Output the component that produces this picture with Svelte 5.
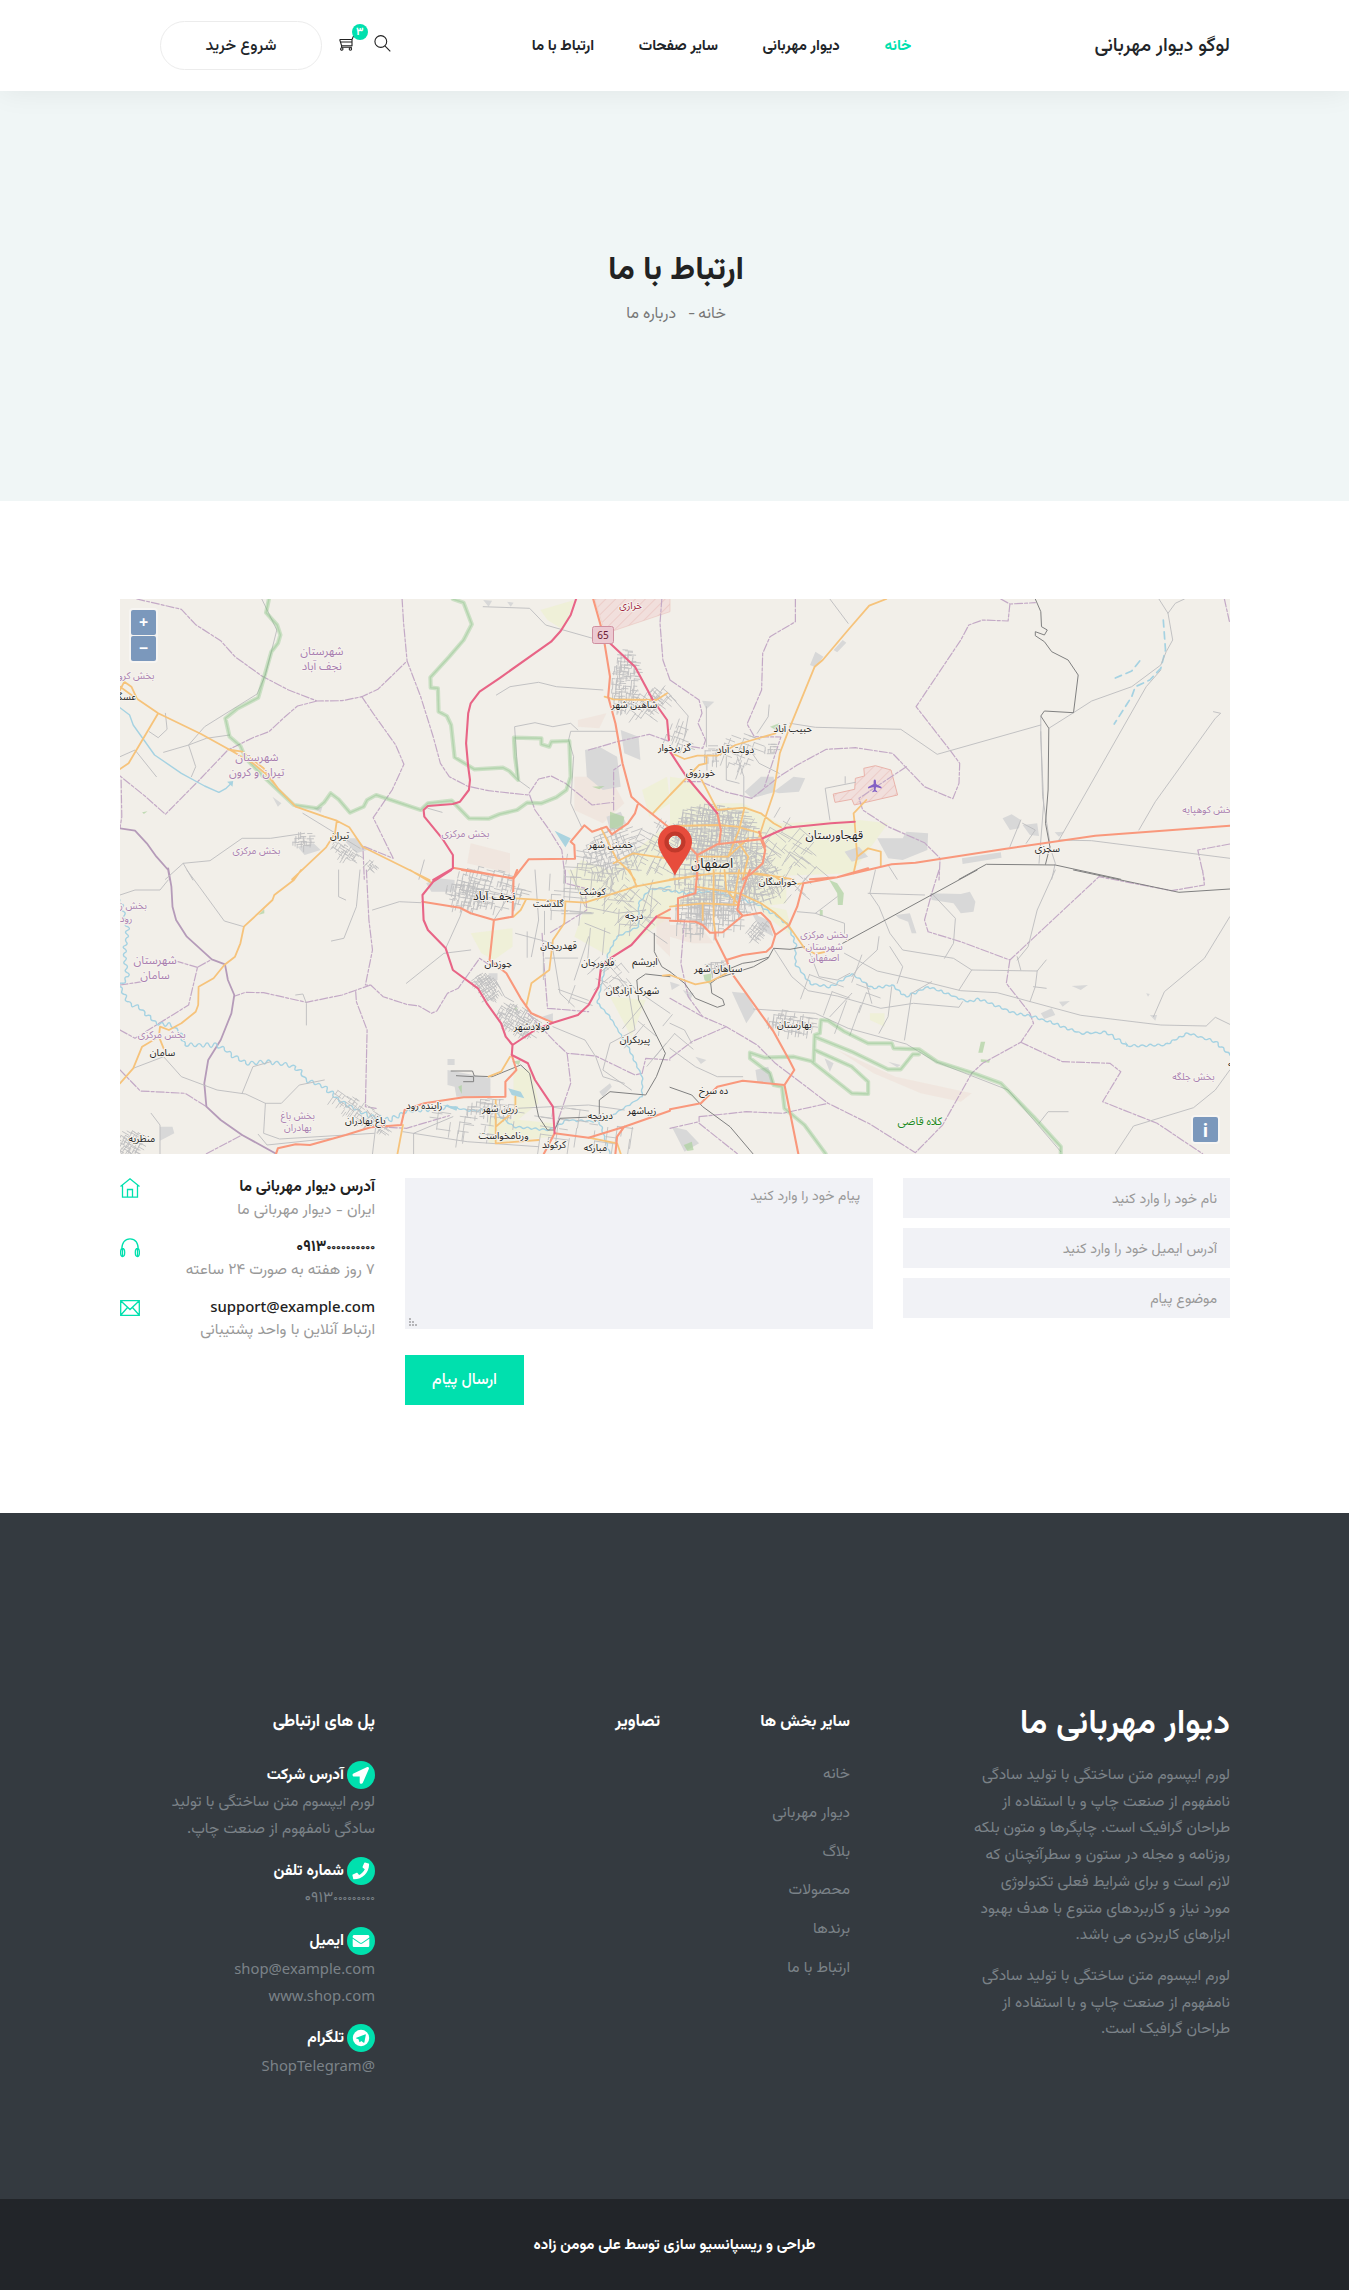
<script>
  const nav = ['خانه', 'دیوار مهربانی', 'سایر صفحات', 'ارتباط با ما'];
  const fields = ['نام خود را وارد کنید', 'آدرس ایمیل خود را وارد کنید', 'موضوع پیام'];
  const links = ['خانه', 'دیوار مهربانی', 'بلاگ', 'محصولات', 'برندها', 'ارتباط با ما'];

  // The map is authored in four survey sheets; each has its own scale and origin.
  const sheets = {
    tl: [0.35714, -10, -9],
    tr: [0.36352, 550, -9],
    bl: [0.35714, -10, 271],
    br: [0.36352, 550, 271]
  };
  const px = (s, x) => x * sheets[s][0] + sheets[s][1];
  const py = (s, y) => y / 3 + sheets[s][2];

  function line(s, pts, close = false) {
    return pts
      .split(' ')
      .map((p, i) => {
        const [x, y] = p.split(',').map(Number);
        return (i ? 'L' : 'M') + px(s, x).toFixed(1) + ' ' + py(s, y).toFixed(1);
      })
      .join('') + (close ? 'Z' : '');
  }
  const lines = (rows) => rows.map(([s, p]) => line(s, p)).join('');
  const areas = (rows) => rows.map(([s, p]) => line(s, p, true)).join('');

  function random(seed) {
    let a = seed;
    return () => {
      a = (a * 1664525 + 1013904223) % 4294967296;
      return a / 4294967296;
    };
  }

  // Street grid for a built-up patch: centre, size, rotation and block length.
  function streets([cx, cy, w, h, deg, step, keep], seed) {
    const r = random(seed * 7919 + 13);
    const t = (deg * Math.PI) / 180;
    const c = Math.cos(t);
    const n = Math.sin(t);
    const at = (x, y) => `${(cx + x * c - y * n).toFixed(1)} ${(cy + x * n + y * c).toFixed(1)}`;
    let d = '';
    for (let y = -h / 2; y <= h / 2; y += step) {
      for (let x = -w / 2; x <= w / 2; x += step) {
        if ((x * x) / (w * w / 4) + (y * y) / (h * h / 4) > 1.25) continue;
        const jx = (r() - 0.5) * step * 0.6;
        const jy = (r() - 0.5) * step * 0.6;
        if (r() < keep) d += `M${at(x + jx, y + jy)}L${at(x + jx + step * (0.8 + r() * 1.6), y + jy)}`;
        if (r() < keep) d += `M${at(x + jx, y + jy)}L${at(x + jx, y + jy + step * (0.8 + r() * 1.6))}`;
      }
    }
    return d;
  }

  // River courses wind around their general direction.
  function meander(s, pts, amp) {
    const p = pts.split(' ').map((q) => q.split(',').map(Number)).map(([x, y]) => [px(s, x), py(s, y)]);
    const r = random(71);
    let d = `M${p[0][0].toFixed(1)} ${p[0][1].toFixed(1)}`;
    let side = 1;
    for (let i = 1; i < p.length; i++) {
      const [x0, y0] = p[i - 1];
      const [x1, y1] = p[i];
      const len = Math.hypot(x1 - x0, y1 - y0) || 1;
      const k = Math.max(1, Math.round(len / 4));
      for (let j = 1; j <= k; j++) {
        const m = (j - 0.5) / k;
        const o = amp * (0.5 + r()) * side;
        side = -side;
        d += `Q${(x0 + (x1 - x0) * m - ((y1 - y0) / len) * o).toFixed(1)} ${(y0 + (y1 - y0) * m + ((x1 - x0) / len) * o).toFixed(1)} ${(x0 + ((x1 - x0) * j) / k).toFixed(1)} ${(y0 + ((y1 - y0) * j) / k).toFixed(1)}`;
      }
    }
    return d;
  }

  const fields_green = areas([
    ['tl', '1490,600 1560,560 1568,640 1510,680'],
    ['tl', '1290,850 1320,810 1400,840 1568,700 1568,870 1290,870'],
    ['tl', '1205,60 1300,30 1270,120 1225,90'],
    ['tr', '0,560 60,570 100,640 200,640 300,700 520,690 600,700 500,850 0,870'],
    ['bl', '1280,0 1568,0 1568,140 1490,200 1400,260 1300,200 1330,110'],
    ['bl', '1010,190 1127,175 1127,230 1075,270 1040,250'],
    ['bl', '1130,590 1180,600 1200,700 1130,760'],
    ['bl', '1060,740 1240,760 1240,800 1060,820'],
    ['bl', '1400,380 1500,390 1460,500'],
    ['br', '0,0 320,0 320,100 250,110 200,80 0,110'],
    ['br', '230,100 320,120 340,200 290,160'],
    ['br', '550,430 590,430 590,470 550,450']
  ]);
  const dusty = areas([
    ['tl', '1310,390 1390,370 1370,415 1310,410'],
    ['tl', '1300,560 1400,560 1440,640 1380,700 1300,660'],
    ['tl', '1010,760 1120,790 1120,850 1000,820'],
    ['bl', '1530,150 1568,140 1568,260 1530,220'],
    ['br', '460,540 620,620 830,670 800,695 690,670 560,610'],
    ['br', '0,165 80,165 120,220 60,220 0,200']
  ]);
  const built = areas([
    ['tl', '1330,480 1370,470 1420,500 1430,590 1380,600 1335,560'],
    ['tl', '1430,420 1480,440 1485,510 1440,490'],
    ['tl', '1390,680 1430,665 1445,700 1400,720'],
    ['tl', '525,770 570,760 590,780 545,795'],
    ['tl', '650,745 690,745 720,780 690,790'],
    ['tl', '455,620 480,640 470,650'], ['tl', '570,655 595,650 590,668'],
    ['tl', '1045,30 1070,32 1060,50'], ['tl', '1112,35 1130,38 1122,50'],
    ['tr', '205,605 250,560 285,560 290,605 225,625'],
    ['tr', '285,605 340,560 372,565 355,605 300,610'],
    ['tr', '385,225 400,185 422,200 400,232'],
    ['tr', '450,180 475,150 485,158 460,187'],
    ['tr', '88,332 122,335 100,358'],
    ['tr', '570,745 640,745 650,725 710,730 708,780 640,810 600,805'],
    ['tr', '803,805 910,787 912,803 805,822'],
    ['tr', '915,685 940,673 965,690 960,715 935,720'],
    ['tr', '970,705 1010,700 1015,738 990,735'],
    ['tr', '1058,727 1085,725 1070,740'],
    ['tr', '480,785 520,770 545,800 500,815'],
    ['bl', '945,600 1065,625 1065,680 970,680 965,650 945,645'],
    ['bl', '945,567 965,567 965,585 945,585'],
    ['bl', '885,40 920,25 965,30 965,65 900,65'],
    ['bl', '1060,310 1085,310 1085,330 1060,330'],
    ['bl', '140,770 175,770 180,790 140,812'],
    ['bl', '1370,665 1400,640 1405,650 1380,680'],
    ['bl', '1210,440 1240,430 1240,455'],
    ['br', '170,365 210,370 235,420 210,460'],
    ['br', '235,600 270,590 285,640 240,635'],
    ['br', '715,70 800,72 825,65 840,95 835,125 800,130 780,100 720,90'],
    ['br', '620,135 660,130 678,190 665,190 655,155 630,145'],
    ['br', '1020,430 1050,415 1060,435 1030,447'],
    ['br', '1070,395 1100,393 1080,410'], ['br', '1105,348 1150,345 1130,360'],
    ['br', '425,565 450,580 440,605'], ['br', '600,575 635,585 625,592'],
    ['br', '5,770 45,780 80,820 40,845'],
    ['br', '70,560 100,570 85,582'], ['br', '0,335 28,345 5,360'],
    ['br', '35,360 65,370 55,390'],
    ['br', '225,130 270,150 285,200 250,180'],
    ['br', '1310,370 1320,372 1315,380'], ['br', '1320,435 1340,435 1335,452']
  ]);
  const woods = areas([
    ['tl', '90,667 105,664 95,672'], ['tl', '1400,665 1440,680 1435,720 1400,715'],
    ['tl', '1350,590 1385,588 1370,598'],
    ['tr', '275,410 300,400 300,425'],
    ['bl', '415,135 432,118 432,130'], ['bl', '975,650 985,645 985,672'],
    ['bl', '1125,575 1150,570 1145,585'], ['bl', '1130,415 1140,412 1138,425'],
    ['br', '855,515 867,515 860,548 848,548'], ['br', '855,568 880,570 878,578 855,575'],
    ['br', '92,315 115,310 112,345 95,330'], ['br', '438,30 460,40 478,70 475,105 462,105 460,70'],
    ['br', '38,825 60,815 65,840 48,843'], ['br', '412,120 420,120 420,138 412,138']
  ]);
  const lakes = areas([
    ['tl', '1245,722 1290,745 1275,772'], ['tl', '328,575 345,573 343,590'],
    ['bl', '1115,655 1150,665 1160,685 1125,675'], ['bl', '930,705 975,710 970,722'],
    ['br', '1252,513 1260,525 1256,532']
  ]);

  const airport = line('tr', '450,612 508,598 510,565 535,558 533,535 565,527 608,540 626,615 507,645 500,628 455,637', true);
  const airbase = line('tl', '1358,27 1568,0 1568,65 1410,122 1385,120', true);

  const lanes = lines([
    ['tl', '425,27 467,120 435,255 412,312 265,410 220,465 150,487'],
    ['tl', '155,370 160,418 135,443 110,425'],
    ['tl', '335,435 270,445 220,465 240,530 228,560'],
    ['tl', '28,500 70,480 130,560'],
    ['tl', '1045,50 1175,55 1220,105 1385,155'],
    ['tl', '1082,315 1120,290 1200,277 1250,290 1380,300'],
    ['tl', '1420,424 1290,424 1284,450 1298,500 1290,640 1320,710'],
    ['tl', '1310,420 1290,400 1240,410 1190,398 1133,410 1143,570 1175,595'],
    ['tl', '155,868 205,820 280,812 370,745 450,745 545,730'],
    ['tl', '540,670 700,775'], ['tl', '205,820 232,870'],
    ['tl', '890,655 930,667'], ['tl', '865,868 880,810'],
    ['tr', '330,400 400,412 635,418 735,493 1020,405'],
    ['tr', '1020,425 1025,620 1045,760'], ['tr', '1020,380 1020,440 1028,640 1015,820'],
    ['tr', '1042,415 1110,368 1160,333 1270,290 1350,225 1365,185 1383,150 1370,70 1345,27'],
    ['tr', '1370,70 1390,40 1415,27'], ['tr', '1350,240 1310,290 1070,750'],
    ['tr', '1495,365 1515,370 1500,385 1335,635 1290,720'],
    ['tr', '440,27 490,100'], ['tr', '1070,750 1160,752 1540,805'],
    ['tr', '185,500 203,560 203,653'], ['tr', '440,690 427,595 510,577'],
    ['tr', '482,560 482,580'], ['tr', '273,345 270,380 240,430'],
    ['tr', '0,315 50,378 40,440'], ['tr', '100,350 100,470'],
    ['tr', '965,690 935,770'], ['tr', '970,700 1005,720 980,760'],
    ['tr', '155,500 155,570 190,580'], ['tr', '220,480 245,520 300,550'],
    ['tr', '1045,770 1060,820 1050,868'], ['tr', '600,825 625,868'],
    ['bl', '215,0 250,50 320,153 375,170'],
    ['bl', '28,75 70,60 140,60 163,30'],
    ['bl', '65,595 150,560 200,620 300,660 380,672 435,700 480,700 530,645 600,630'],
    ['bl', '370,670 400,590 450,575'],
    ['bl', '435,700 430,790 475,807 740,790'], ['bl', '415,793 440,825 620,805'],
    ['bl', '820,785 1000,815 1200,830'], ['bl', '735,120 810,95 870,98'],
    ['bl', '640,0 640,80 660,90'], ['bl', '700,0 690,110 655,205 620,213'],
    ['bl', '520,375 540,372 550,400 550,465'],
    ['bl', '1020,0 980,140 940,235'], ['bl', '1010,240 935,250 830,340'],
    ['bl', '1075,150 1110,90 1130,85'], ['bl', '1135,190 1240,220'],
    ['bl', '1080,330 1105,380 1130,395'], ['bl', '1190,0 1200,150 1180,260'],
    ['bl', '1240,240 1260,370 1300,410'], ['bl', '1300,330 1340,200'],
    ['bl', '1400,290 1450,350 1470,480 1400,520 1380,600 1460,660'],
    ['bl', '1240,470 1330,510 1360,560 1380,620 1440,640'],
    ['bl', '735,851 745,760 720,720'], ['bl', '850,851 850,790 960,740'],
    ['bl', '1140,715 1340,705 1440,720'], ['bl', '115,730 140,765 140,851'],
    ['bl', '1290,0 1330,110 1420,130 1500,120'], ['bl', '1330,160 1400,190'],
    ['bl', '1500,380 1568,430'], ['bl', '1520,30 1480,160 1560,220'],
    ['br', '230,417 400,430 490,475 650,522 730,575 930,660 1075,845'],
    ['br', '480,250 570,303 700,335 800,362 900,368 1130,436 1350,465 1475,468 1500,442 1540,463'],
    ['br', '645,510 665,370 720,335'],
    ['br', '285,235 335,320 380,362 460,378 580,415 670,400 795,412 805,395'],
    ['br', '565,0 550,70 575,110 605,190 640,240 780,265 830,300 1010,303 1035,270'],
    ['br', '720,70 785,145 780,220 755,265'], ['br', '1060,0 1010,120 985,230 955,270'],
    ['br', '830,300 795,360'], ['br', '1010,303 1005,350 990,395'],
    ['br', '1540,140 1470,265 1360,365 1330,440'],
    ['br', '1540,600 1500,660 1440,713 1275,768 1225,851'],
    ['br', '545,70 700,75'], ['br', '350,125 400,130 480,160 480,190'],
    ['br', '400,130 460,80'], ['br', '575,200 570,240 520,290 500,320'],
    ['br', '605,230 640,290 625,340'], ['br', '500,370 440,440'],
    ['br', '540,340 555,400'], ['br', '610,350 600,440 575,490'],
    ['br', '955,260 965,300'], ['br', '1035,355 1000,350'],
    ['br', '0,535 70,590 130,620 200,620'], ['br', '0,460 40,480 60,520'],
    ['br', '385,250 410,320 460,330 495,310'], ['br', '1015,760 1040,725 1095,725']
  ]);

  const rails = lines([
    ['tr', '1005,27 1020,65 1022,110 1038,120 1030,135 1005,125 1005,137 1030,155 1050,185 1095,210 1123,255 1110,368 1030,363 1020,378 1042,415 1040,600 1033,700 1045,770 1033,823'],
    ['tr', '795,868 870,823 1060,825 1240,868'],
    ['bl', '955,603 1015,603 1020,618 1070,620 1150,585 1175,610 1200,740 1225,780 1245,780 1260,745 1370,740 1370,690 1400,665 1500,675 1530,620 1555,550 1480,390 1475,330 1500,312 1568,320'],
    ['bl', '970,617 1018,620 1018,635 990,635'],
    ['bl', '1524,190 1524,245 1545,290 1568,305'],
    ['br', '475,220 845,0'], ['br', '1110,0 1400,67 1540,57'],
    ['br', '0,305 40,340 70,385 130,412 150,405 145,388 115,370 112,340 130,325 230,290 270,265 285,235 330,238 370,230'],
    ['br', '155,300 200,280 230,275 270,262'],
    ['br', '0,652 60,675 90,710 165,770 228,851']
  ]);

  const borders = lines([
    ['tl', '75,27 200,58 240,104 310,152 350,200 425,258 500,300 580,333 650,332 705,320 750,298 832,213'],
    ['tl', '818,27 822,100 832,213 870,320 905,440 925,520 950,560 1000,588 1060,602 1170,615 1200,567 1235,558 1275,580 1350,645 1410,637'],
    ['tl', '705,320 740,375 800,465 823,523 790,600 737,683 793,805 708,768 712,870'],
    ['tl', '580,333 525,348 490,380 445,425 400,443 330,480 250,570 155,673 100,620 28,558'],
    ['tl', '31,570 33,680 28,715'],
    ['tl', '1175,615 1190,660 1230,720 1265,780 1275,870'],
    ['tl', '1545,27 1540,100 1548,210 1568,270'],
    ['tl', '1340,480 1420,455 1510,433 1568,455'],
    ['tl', '1410,660 1410,540 1430,525'],
    ['tr', '345,27 345,95 275,140 255,190 252,300 212,402 232,440 305,441 260,590'],
    ['tr', '0,270 80,330 88,370 77,400 98,450 90,475 60,470'],
    ['tr', '910,27 935,42 1005,38'],
    ['tr', '935,42 930,93 860,90 822,105 800,150 677,350 770,480 797,520 795,580 778,626 700,590 612,490 510,473 430,478 350,525 300,560 225,625 150,605 85,575 40,575'],
    ['tr', '650,530 520,625 530,660 600,710 700,758 743,805 740,870'],
    ['tr', '1525,27 1540,100'], ['tr', '1540,762 1452,780 1470,870'],
    ['bl', '718,0 725,150 735,240 715,345 730,345 765,380 830,403 865,408 900,430 915,423 945,370 975,355 1035,265 1070,290'],
    ['bl', '730,345 650,375 550,397 430,368 380,367 350,378'],
    ['bl', '688,365 690,395 720,480 715,710 745,715'],
    ['bl', '28,480 70,505 130,465 220,405 245,292 285,268'],
    ['bl', '245,292 190,275'], ['bl', '28,600 85,663 210,670 270,710'],
    ['bl', '270,851 370,795'], ['bl', '740,770 830,775 950,737'],
    ['bl', '1170,430 1250,520 1280,550 1360,558 1470,615 1490,610 1500,565 1568,570'],
    ['bl', '1280,550 1290,640 1250,765'], ['bl', '1210,190 1215,280 1225,415 1340,425'],
    ['bl', '1275,0 1275,40 1330,55 1335,120 1230,190'],
    ['bl', '28,345 90,335'],
    ['br', '40,150 30,280 50,380 90,440'],
    ['br', '0,385 90,440 155,470 240,525 290,580 435,700 550,762 675,848'],
    ['br', '0,565 60,515 155,470'], ['br', '80,740 210,725 310,730 435,700'],
    ['br', '0,775 80,755 80,740'], ['br', '80,760 185,851'],
    ['br', '740,0 720,70 700,150 710,185 800,215 935,270 1180,20 1380,62 1470,45 1465,0'],
    ['br', '935,270 925,340 990,430 1000,460 965,517 860,580 830,610 750,765 675,848'],
    ['br', '965,517 1080,575 1210,580 1240,605 1190,695 1340,760 1465,851']
  ]);
  const province = lines([
    ['tl', '28,715 70,722 103,760 130,800 163,840 168,870'],
    ['bl', '163,-5 172,50 175,110 185,150 215,200 285,268 322,283 330,330 348,375 340,430 310,510 275,570 264,640 270,710 310,750 370,795 465,851']
  ]);
  const reserves = lines([
    ['tl', '445,27 437,68 468,105 477,135 470,160 452,185 415,323 355,357 323,385 335,440 365,468 380,505 430,560 515,645 580,655 600,637 618,610 640,628 672,668 710,650 720,630 745,615 870,660 890,640 957,632 1005,685 1060,686 1090,673 1140,660 1168,638 1208,640 1250,622 1278,600 1290,560 1286,453 1236,455 1230,470 1208,463 1208,445 1131,443 1134,500 1143,570 1118,543 1100,533 1020,538 965,502 955,405 943,378 920,365 918,295 898,293 897,262 950,200 990,150 1013,103 990,38 960,27'],
    ['br', '398,495 412,490 415,450 435,452 480,485 545,520 610,520 615,535 685,538 735,575 840,612 910,640 1000,740 1075,830 1075,851'],
    ['br', '398,495 395,575 340,560 260,563 220,548 220,565 275,610 285,645 308,650 315,715 370,765 428,851'],
    ['br', '398,500 500,545 600,598 635,598 668,553 685,553'],
    ['br', '398,540 500,590 545,635 545,672 500,670 390,575']
  ]);
  const secondary = lines([
    ['tl', '28,290 60,315 135,370 255,432 345,485 400,520 440,555 470,595 520,650 600,680 635,692 670,712 707,770 895,870'],
    ['tl', '330,478 370,485 430,535 470,595'], ['tl', '28,300 40,275 60,290 75,325'],
    ['tl', '635,692 630,730 605,772 510,868'], ['tl', '135,370 52,520 28,537'],
    ['tl', '1385,320 1410,328 1530,330 1560,310'], ['tl', '1410,820 1465,790 1560,805'],
    ['tl', '1520,670 1568,615'], ['tl', '1375,715 1420,810 1450,840 1470,870'],
    ['tr', '595,27 548,47 490,120 420,210 398,230 325,425 302,490 285,610 260,690 245,740'],
    ['tr', '5,490 40,507 75,497 130,497 180,465 290,430'],
    ['tr', '0,615 40,570 80,525 100,520 100,497'], ['tr', '85,565 130,660'],
    ['tr', '130,660 205,653 250,670 285,700 305,712'],
    ['tr', '205,653 190,720 160,800'], ['tr', '10,708 130,705 185,710 250,730'],
    ['tr', '505,850 515,800 508,700 505,670 540,630'],
    ['tr', '515,800 545,775 580,785 580,828'],
    ['tr', '75,800 160,800 215,745'], ['tr', '190,760 215,800 200,868'], ['tr', '0,868 120,850 240,850 340,868'],
    ['bl', '535,0 515,30 460,75 455,90 375,170 365,220 350,260 320,285 290,325 248,350 247,405 240,425 200,460 165,480 140,470 137,500 90,530 65,595 28,640'],
    ['bl', '137,500 150,535'], ['bl', '840,0 900,38'], ['bl', '1135,85 1330,98 1470,50 1568,30'],
    ['bl', '1165,88 1150,120 1130,140'], ['bl', '1275,98 1272,160 1240,210 1230,300 1180,340 1165,410'],
    ['bl', '820,765 805,851'], ['bl', '1080,690 1080,820 1200,810'],
    ['bl', '1135,680 1135,720 1080,770'], ['bl', '1455,0 1475,50'], ['bl', '1340,803 1420,820 1430,851'],
    ['bl', '1120,560 1095,605 1060,620'],
    ['br', '-20,317 0,315 70,343 110,335 155,310'], ['br', '120,0 120,150 125,188'],
    ['br', '0,110 90,100 190,105'], ['br', '70,50 190,70 250,100 290,130 325,165 370,235 400,252 430,245'],
    ['br', '90,100 90,150'], ['br', '150,0 155,60 190,105'], ['br', '190,0 175,100'],
    ['br', '0,30 60,20'], ['br', '220,10 290,20 320,45 367,40']
  ]);
  const primary = lines([
    ['tl', '1353,27 1380,130 1400,260 1395,320 1415,400 1435,520 1460,620 1480,640 1568,715'],
    ['tl', '960,833 1050,850 1130,866 1172,808 1302,806 1300,765 1290,755 1328,706 1350,725 1390,710 1405,733 1450,700 1470,670 1477,645'],
    ['tr', '385,868 460,862 610,823 675,818 920,777 1170,737 1540,707'],
    ['tr', '0,710 75,795 130,763 250,748 262,780 255,820 225,850 200,868'],
    ['tr', '130,670 140,720 135,763'], ['tr', '245,725 262,770'], ['tr', '75,795 75,868'],
    ['bl', '985,0 1055,12 1130,25 1140,0'], ['bl', '875,95 980,113 1010,130 1075,150 1127,140 1130,20'],
    ['bl', '1075,150 1063,270 1110,310 1150,385 1180,430 1240,458'],
    ['bl', '1125,555 1138,600 1107,635 1107,680 990,682 880,700 825,720 815,765 730,772 660,795 560,825 520,823 470,835 465,851'],
    ['bl', '1245,790 1340,803 1440,770 1420,800 1415,851'], ['bl', '1440,770 1568,722'],
    ['bl', '1245,790 1215,851'], ['bl', '1530,140 1568,118'], ['bl', '1530,142 1568,145'],
    ['br', '545,-5 460,22 367,40 350,110 328,165 290,195 280,230 265,245 200,255 155,270'],
    ['br', '0,152 70,155 90,165 110,188 145,187 200,137 250,128 275,155 290,195'],
    ['br', '125,188 125,205 155,270 170,310 285,485 328,570 342,600 315,645 353,851'],
    ['br', '315,645 200,632 130,650 85,700 0,718'],
    ['br', '22,150 22,85 70,70 75,0'], ['br', '220,0 195,70 185,120 200,137']
  ]);
  const trunk = lines([
    ['tl', '1305,27 1290,75 1262,123 1235,155 1090,265 1035,305 1010,340 1003,370 997,460 1003,530 1008,570 1005,600 980,635 960,642 890,648 878,660 880,680 930,745 960,795 960,835 905,870'],
    ['tl', '1400,160 1470,230 1520,330 1560,390 1565,450'],
    ['tr', '0,485 45,560 130,670'], ['tr', '255,745 320,713 443,700 508,695'],
    ['bl', '955,0 905,35 875,75 878,150 890,180 940,235 960,300 1030,355 1055,400 1095,460 1108,500 1127,525 1125,555 1170,580 1190,630 1240,710 1245,790'],
    ['bl', '1127,525 1190,480 1240,458 1310,435 1340,405 1368,350 1375,290 1405,262 1460,225 1530,140']
  ]);
  const canals = lines([['tl', '28,353 55,375 65,405 125,495 200,550 265,588 305,607 325,595 340,580']]);
  const rivers =
    meander('bl', '28,90 50,170 40,260 50,320 28,350 50,395 90,420 130,460 170,465 200,490 210,525', 3) +
    meander('bl', '210,525 300,525 380,580 450,575 520,590 550,630 600,650 640,690 720,735 780,750 830,725 950,710', 3.5) +
    meander('bl', '950,710 1010,722 1070,720 1100,745 1130,770 1230,780 1280,750 1370,755 1400,851', 1.5) +
    meander('bl', '1568,50 1510,60 1480,100 1480,170 1420,200 1395,250 1365,400 1400,440 1450,530 1490,620 1490,680 1400,740', 1.2) +
    meander('br', '-20,62 0,62 50,70 120,65 200,90 235,100 290,135 325,165 345,220 345,280 385,340 440,352 500,312 560,355 610,345 650,380 710,350 820,395 850,387 950,430 1000,440 1060,462 1130,490 1200,487 1260,528 1360,525 1425,490 1500,515 1540,555', 1.8);
  const wadis = lines([
    ['tr', '1357,90 1363,180 1350,235 1320,270 1280,290 1270,320 1222,402'],
    ['tr', '1292,213 1270,243 1225,264']
  ]);

  const patches = [
    [598, 262, 84, 100, 3, 5, 0.75],
    [592, 232, 70, 50, 8, 4, 0.75],
    [632, 280, 50, 50, -18, 5, 0.6],
    [666, 265, 60, 70, 40, 9, 0.4],
    [572, 315, 30, 40, 2, 5, 0.6],
    [595, 310, 50, 40, 3, 5, 0.75],
    [638, 330, 14, 22, 40, 3, 0.7],
    [370, 288, 66, 34, 14, 5.5, 0.7],
    [345, 296, 36, 26, 12, 4, 0.7],
    [504, 82, 22, 60, 4, 3.5, 0.7],
    [524, 105, 26, 34, 35, 5, 0.6],
    [541, 95, 18, 18, 40, 4, 0.7],
    [492, 252, 52, 40, -20, 5, 0.7],
    [478, 262, 60, 30, 10, 7, 0.4],
    [540, 248, 46, 50, 28, 6, 0.45],
    [398, 420, 40, 24, 32, 3, 0.75],
    [367, 387, 26, 18, 55, 2.6, 0.9],
    [671, 423, 44, 20, 8, 4, 0.75],
    [370, 510, 44, 18, 4, 4, 0.6],
    [618, 150, 30, 34, 20, 5.5, 0.5],
    [560, 132, 20, 30, 20, 5.5, 0.45],
    [590, 155, 12, 16, 0, 4, 0.6],
    [10, 545, 24, 26, 30, 3.5, 0.8],
    [225, 252, 26, 12, 32, 3, 0.7],
    [182, 240, 20, 12, 0, 3, 0.6],
    [252, 266, 10, 8, 40, 2.6, 0.7],
    [596, 368, 20, 10, 0, 3, 0.8],
    [480, 300, 100, 60, 5, 14, 0.3],
    [510, 300, 60, 40, 40, 6, 0.4],
    [440, 290, 40, 50, 3, 11, 0.45],
    [490, 375, 40, 30, 50, 7, 0.4],
    [455, 530, 120, 34, 8, 9, 0.35],
    [330, 525, 80, 18, 8, 7, 0.35],
    [240, 512, 60, 16, 35, 4, 0.5],
    [720, 380, 70, 60, 20, 16, 0.25],
    [540, 430, 50, 40, 40, 14, 0.3],
    [650, 150, 10, 10, 0, 3, 0.7],
    [470, 395, 60, 40, 20, 14, 0.3],
    [430, 340, 50, 50, 0, 16, 0.3],
    [650, 240, 70, 60, 30, 10, 0.3]
  ].map(streets).join('');

  const labels = [
    ['tl', 593, 187, 'شهرستان', 'state'], ['tl', 593, 232, 'نجف آباد', 'state'],
    ['tl', 411, 506, 'شهرستان', 'state'], ['tl', 411, 551, 'تیران و کرون', 'state'],
    ['tl', 64, 258, 'بخش کرون', 'district'], ['tl', 30, 322, 'عسگران', 'town'],
    ['tl', 410, 785, 'بخش مرکزی', 'district'], ['tl', 995, 733, 'بخش مرکزی', 'district'],
    ['tl', 643, 739, 'تیران', 'town'], ['tl', 1458, 50, 'خرازی', 'air'],
    ['tl', 1468, 345, 'شاهین شهر', 'town'], ['tl', 1402, 765, 'خمینی شهر', 'town'],
    ['tr', 12, 474, 'گز برخوار', 'town'], ['tr', 338, 418, 'حبیب آباد', 'town'],
    ['tr', 180, 481, 'دولت آباد', 'town'], ['tr', 84, 549, 'خورزوق', 'town'],
    ['tr', 452, 740, 'قهجاورستان', 'city'], ['tr', 116, 826, 'اصفهان', 'capital'],
    ['tr', 1038, 777, 'سجزی', 'town'], ['tr', 1481, 661, 'بخش کوهپایه', 'district'],
    ['bl', 40, 110, 'بخش زاینده', 'district'], ['bl', 45, 147, 'رود', 'district'],
    ['bl', 126, 273, 'شهرستان', 'state'], ['bl', 126, 318, 'سامان', 'state'],
    ['bl', 145, 495, 'بخش مرکزی', 'district'], ['bl', 147, 551, 'سامان', 'town'],
    ['bl', 526, 739, 'بخش باغ', 'district'], ['bl', 526, 774, 'بهادران', 'district'],
    ['bl', 715, 753, 'باغ بهادران', 'town'], ['bl', 89, 807, 'منظریه', 'town'],
    ['bl', 880, 709, 'زاینده رود', 'town'], ['bl', 1092, 717, 'زرین شهر', 'town'],
    ['bl', 1102, 799, 'ورنامخواست', 'town'], ['bl', 1243, 826, 'کرکوند', 'town'],
    ['bl', 1359, 835, 'مبارکه', 'town'], ['bl', 1373, 738, 'دیزیچه', 'town'],
    ['bl', 1489, 723, 'زیباشهر', 'town'], ['bl', 1470, 511, 'پیربکران', 'town'],
    ['bl', 1181, 471, 'فولادشهر', 'town'], ['bl', 1463, 363, 'شهرک آزادگان', 'town'],
    ['bl', 1498, 277, 'ابریشم', 'town'], ['bl', 1366, 279, 'فلاورجان', 'town'],
    ['bl', 1256, 228, 'قهدریجان', 'town'], ['bl', 1087, 282, 'جوزدان', 'town'],
    ['bl', 1076, 83, 'نجف آباد', 'city'], ['bl', 1227, 104, 'گلدشت', 'town'],
    ['bl', 1351, 66, 'کوشک', 'town'], ['bl', 1468, 139, 'درچه', 'town'],
    ['br', 297, 36, 'خوراسگان', 'town'], ['br', 133, 298, 'سپاهان شهر', 'town'],
    ['br', 342, 465, 'بهارستان', 'town'], ['br', 120, 664, 'ده سرخ', 'town'],
    ['br', 424, 197, 'بخش مرکزی', 'district'], ['br', 424, 231, 'شهرستان', 'district'],
    ['br', 424, 266, 'اصفهان', 'district'], ['br', 1440, 622, 'بخش جلگه', 'district'],
    ['br', 1553, 584, 'اژیه', 'town'], ['br', 687, 757, 'کلاه قاضی', 'park']
  ];
</script>

<div class="page" dir="rtl">
  <header>
    <div class="bar">
      <div class="logo">لوگو دیوار مهربانی</div>
      <nav>
        {#each nav as item, i}
          <a href="#top" class:active={i === 0}>{item}</a>
        {/each}
      </nav>
      <div class="tools">
        <svg class="search" viewBox="0 0 17 17" aria-hidden="true"><circle cx="6.8" cy="6.5" r="5.9" /><path d="M10.9 10.8 16.3 16.3" /></svg>
        <span class="cart">
          <svg viewBox="0 0 16 16" aria-hidden="true"><path d="M0.7 4.5H13v6.200H2.600L0.700 4.500M1.500 7H13M13 10.700H2.600v1.600H13M13 4.500l1.300-3H16" /><circle cx="2.800" cy="14" r="1.200" /><circle cx="11.400" cy="14" r="1.200" /></svg>
          <b>۳</b>
        </span>
      </div>
      <a class="start" href="#top">شروع خرید</a>
    </div>
  </header>

  <section class="hero">
    <h1>ارتباط با ما</h1>
    <p><span>خانه</span><i>-</i><span>درباره ما</span></p>
  </section>

  <main>
    <div class="map">
      <svg viewBox="0 0 1110 555" width="1110" height="555" direction="rtl">
        <defs>
          <pattern id="hatch" width="7" height="7" patternUnits="userSpaceOnUse" patternTransform="rotate(45)">
            <rect width="7" height="7" fill="#f1dfdc" /><path d="M0 0V7" stroke="#e8b9b4" stroke-width="1" />
          </pattern>
        </defs>
        <rect width="1110" height="555" fill="#f2efe9" />
        <path d={fields_green} fill="#eef0d5" opacity=".85" />
        <path d={dusty} fill="#f0e2da" opacity=".7" />
        <path d={built} fill="#d8d8d8" />
        <path d={woods} fill="#add19e" opacity=".7" />
        <path d={lakes} fill="#aad3df" />
        <path d={airport} fill="url(#hatch)" stroke="#e9b3aa" />
        <path d={airbase} fill="url(#hatch)" stroke="#e9c4bd" stroke-width=".6" />
        <path d={borders} class="border" />
        <path d={province} class="province" />
        <path d={canals + rivers} class="water" />
        <path d={wadis} class="water wadi" />
        <path d={lanes} class="lane" />
        <path d={patches} class="street" />
        <path d={rails} class="rail" />
        <path d={reserves} class="reserve" />
        <path d={reserves} class="reserve inner" />
        <path d={secondary} class="road secondary" />
        <path d={primary} class="road primary" />
        <path d={trunk} class="road trunk" />
        {#each labels as [s, x, y, text, kind]}
          <text x={px(s, x)} y={py(s, y) + 2.5} class={kind}>{text}</text>
        {/each}
        <g class="shield">
          <rect x="472.500" y="27.500" width="21" height="17" rx="2" />
          <text x="483" y="40">65</text>
        </g>
        <path d="M754.800 180.500c1 0 1.200 1.200 1.200 3v1.500l5.500 3v1.500l-5.500-1.500-.4 3 1.600 1.200v1l-2.400-.6-2.400.6v-1l1.600-1.200-.4-3-5.500 1.500v-1.500l5.500-3v-1.500c0-1.800.2-3 1.200-3z" fill="#8461c4" />
        <path fill-rule="evenodd" fill="#e74c3c" d="M555 277C552 268 538 254 538 243a17 17 0 0 1 34 0C572 254 558 268 555 277zM555 236.600a6.400 6.400 0 1 0 0 12.800 6.400 6.400 0 0 0 0-12.800z" />
        <circle cx="555" cy="243" r="8.500" fill="none" stroke="#c0392b" stroke-width="4.200" />
      </svg>
      <div class="zoom"><button>+</button><button>−</button></div>
      <div class="info"><button>i</button></div>
    </div>

    <div class="contact">
      <form class="fields">
        {#each fields as f}<input placeholder={f} />{/each}
      </form>
      <div class="message">
        <div class="area"><span>پیام خود را وارد کنید</span><svg viewBox="0 0 8 8" aria-hidden="true"><path d="M0 0h2v2H0zM0 3h2v2H0zM3 3h2v2H3zM0 6h2v2H0zM3 6h2v2H3zM6 6h2v2H6z" /></svg></div>
        <button class="send">ارسال پیام</button>
      </div>
      <ul class="ways">
        <li>
          <div><h3>آدرس دیوار مهربانی ما</h3><p>ایران - دیوار مهربانی ما</p></div>
          <svg viewBox="0 0 20 20" aria-hidden="true"><path d="M.5 8.500 10 .8l9.500 7.700M2.500 7.500v11.700h15V7.500M7.500 19v-7.500h5V19" /></svg>
        </li>
        <li>
          <div><h3>۰۹۱۳<span class="zeros">۰۰۰۰۰۰۰۰۰۰</span></h3><p>۷ روز هفته به صورت ۲۴ ساعته</p></div>
          <svg viewBox="0 0 20 20" aria-hidden="true"><path d="M1.700 12C1.700 4.500 5 .8 10 .8s8.300 3.700 8.300 11.200M2.500 10.500c1.500 0 2.200 1 2.200 4s-.8 4-2.200 4-1.900-1.500-1.900-4 .6-4 1.900-4zM17.500 10.500c-1.500 0-2.200 1-2.200 4s.8 4 2.200 4 1.900-1.500 1.900-4-.6-4-1.900-4zM2.500 11v7M17.500 11v7" /></svg>
        </li>
        <li>
          <div><h3 class="latin">support@example.com</h3><p>ارتباط آنلاین با واحد پشتیبانی</p></div>
          <svg viewBox="0 0 20 20" aria-hidden="true"><path d="M.7 2.700h18.600v14.600H.7zM.7 2.700 10 11.500l9.300-8.800M.7 17.300 7.500 9.500M19.300 17.300 12.500 9.500" /></svg>
        </li>
      </ul>
    </div>
  </main>

  <footer>
    <div class="cols">
      <div class="about">
        <h2>دیوار مهربانی ما</h2>
        <p>لورم ایپسوم متن ساختگی با تولید سادگی<br />نامفهوم از صنعت چاپ و با استفاده از<br />طراحان گرافیک است. چاپگرها و متون بلکه<br />روزنامه و مجله در ستون و سطرآنچنان که<br />لازم است و برای شرایط فعلی تکنولوژی<br />مورد نیاز و کاربردهای متنوع با هدف بهبود<br />ابزارهای کاربردی می باشد.</p>
        <p>لورم ایپسوم متن ساختگی با تولید سادگی<br />نامفهوم از صنعت چاپ و با استفاده از<br />طراحان گرافیک است.</p>
      </div>
      <div class="links">
        <h4>سایر بخش ها</h4>
        {#each links as l}<a href="#top">{l}</a>{/each}
      </div>
      <div class="pics"><h4>تصاویر</h4></div>
      <div class="reach">
        <h4>پل های ارتباطی</h4>
        <div class="way">
          <h5><svg viewBox="0 0 28 28" aria-hidden="true"><circle cx="14" cy="14" r="14" /><path class="w" d="M20.200 6.100 6.500 12.500c-1.600.7-1.100 3 .6 3h5.600v5.700c0 1.700 2.400 2.200 3.100.6l6-13.700c.6-1.300-.5-2.500-1.600-2z" /></svg>آدرس شرکت</h5>
          <p>لورم ایپسوم متن ساختگی با تولید<br />سادگی نامفهوم از صنعت چاپ.</p>
        </div>
        <div class="way">
          <h5><svg viewBox="0 0 28 28" aria-hidden="true"><circle cx="14" cy="14" r="14" /><path class="w" d="M21.500 6.400 18.100 5.600c-.4-.1-.8.100-.9.500l-1.600 3.700c-.1.300 0 .7.200.9l2 1.600c-1.200 2.500-3.200 4.500-5.700 5.700l-1.600-2c-.2-.3-.6-.4-.9-.2L5.900 17.400c-.4.100-.5.500-.5.900l.8 3.400c.1.400.4.600.8.600 8.300 0 15.100-6.700 15.100-15.100 0-.4-.2-.7-.6-.8z" /></svg>شماره تلفن</h5>
          <p>۰۹۱۳<span class="zeros">۰۰۰۰۰۰۰۰۰</span></p>
        </div>
        <div class="way">
          <h5><svg viewBox="0 0 28 28" aria-hidden="true"><circle cx="14" cy="14" r="14" /><path class="w" d="M5.700 11.700v6.700c0 .9.700 1.600 1.600 1.600h13.400c.9 0 1.600-.7 1.600-1.600v-6.700l-6.700 4.600c-1 .7-2.200.7-3.200 0zM7.300 8c-.9 0-1.600.7-1.600 1.600v.9l7.200 5c.7.500 1.500.5 2.200 0l7.200-5v-.9c0-.9-.7-1.600-1.600-1.600z" /></svg>ایمیل</h5>
          <p class="latin">shop@example.com<br />www.shop.com</p>
        </div>
        <div class="way">
          <h5><svg viewBox="0 0 28 28" aria-hidden="true"><circle cx="14" cy="14" r="14" /><circle class="w" cx="14" cy="14" r="8.200" /><path d="M18 10.400 9.300 13.800c-.5.200-.5.500 0 .7l2.200.7.9 2.700c.2.400.4.400.7.200l1.200-1.100 2.300 1.700c.4.200.7.100.8-.4l1.400-7.200c.100-.6-.2-.9-.8-.7zM12.400 15.700l4.400-3.900-5 3.200z" /></svg>تلگرام</h5>
          <p class="latin">@ShopTelegram</p>
        </div>
      </div>
    </div>
    <div class="credit">طراحی و ریسپانسیو سازی توسط علی مومن زاده</div>
  </footer>
</div>

<style>
  :global(body) { margin: 0; background: #fff; }
  .page {
    width: 1349px;
    font-family: Vazirmatn, 'Noto Sans Arabic', 'Noto Sans', sans-serif;
    font-size: 15.500px;
    color: #212529;
    white-space: nowrap;
  }
  a { color: inherit; text-decoration: none; }
  h1, h2, h3, h4, h5, p, ul { margin: 0; padding: 0; }
  .latin { font-family: 'Noto Sans', sans-serif; }
  .zeros { font-size: 11px; letter-spacing: -2.200px; vertical-align: 1px; line-height: 1; }

  header { position: relative; z-index: 1; height: 91px; background: #fff; box-shadow: 0 0 30px rgba(0, 0, 0, 0.07); }
  .bar { display: flex; align-items: center; height: 91px; padding: 0 119px 0 160px; }
  .logo { width: 136px; font-size: 19.400px; font-weight: 500; padding-top: 1px; }
  nav { display: flex; justify-content: space-between; width: 380px; margin-right: 183px; font-size: 15px; font-weight: 700; padding-top: 1px; }
  .active { color: #00e0ae; }
  .tools { display: flex; align-items: flex-start; gap: 19px; margin-right: 141px; height: 22px; }
  .tools svg { display: block; fill: none; stroke: #222; }
  .search { width: 17px; height: 17px; stroke-width: 1.100; }
  .cart { position: relative; width: 15px; }
  .cart svg { width: 16px; height: 16px; stroke-width: 1.100; }
  .cart b { position: absolute; left: 12px; top: -11px; width: 16px; height: 16px; border-radius: 50%; background: #00e0ae; color: #fff; font-size: 11px; line-height: 18px; text-align: center; }
  .start { box-sizing: border-box; width: 162px; height: 49px; margin-right: 18px; border: 1px solid #ececec; border-radius: 25px; font-size: 16px; font-weight: 500; line-height: 49px; text-align: center; }

  .hero { height: 410px; box-sizing: border-box; padding: 155px 0 0 3px; background: #f0f6f6; text-align: center; }
  h1 { font-size: 32.800px; font-weight: 700; line-height: 50px; color: #222; }
  .hero p { display: flex; justify-content: center; line-height: 36px; color: #777; font-size: 15.800px; }
  .hero i { font-style: normal; margin: 0 3px 0 12px; }

  main { box-sizing: border-box; padding: 98px 119px 0 120px; height: 1012px; }
  .map { position: relative; height: 555px; }
  .map svg { display: block; overflow: hidden; }
  .map path { stroke-linejoin: round; stroke-linecap: round; }
  .border { fill: none; stroke: #c3a9c6; stroke-width: 1.200; stroke-dasharray: 8 2 3 2; }
  .province { fill: none; stroke: #b59bb9; stroke-width: 1.800; }
  .water { fill: none; stroke: #a5d2e2; stroke-width: 1.400; }
  .wadi { stroke-dasharray: 7 5; stroke-width: 1.700; }
  .lane { fill: none; stroke: #bcbcbe; stroke-width: 0.900; }
  .street { fill: none; stroke: #bfbfc1; stroke-width: 0.900; }
  .rail { fill: none; stroke: #808080; stroke-width: 1; }
  .reserve { fill: none; stroke: #7cc07a; stroke-width: 4.200; opacity: 0.320; }
  .reserve.inner { stroke: #6cb56a; stroke-width: 1.400; opacity: 0.250; }
  .road { fill: none; }
  .secondary { stroke: #f6c37b; stroke-width: 1.800; }
  .primary { stroke: #f9987c; stroke-width: 2.100; }
  .trunk { stroke: #e86486; stroke-width: 2.100; }
  .map text {
    font-family: 'Noto Sans Arabic', Vazirmatn, sans-serif;
    font-size: 9.800px;
    text-anchor: middle;
    paint-order: stroke;
    stroke: #f6f3ee;
    stroke-width: 2px;
    stroke-linejoin: round;
    fill: #222;
  }
  .map text.city { font-size: 12px; }
  .map text.capital { font-size: 13.500px; }
  .map text.state { font-size: 11.400px; fill: #a97fb0; }
  .map text.district { font-size: 9.800px; fill: #a97fb0; }
  .map text.air { fill: #a11f3d; }
  .map text.park { fill: #1d8a1d; font-size: 11px; }
  .shield rect { fill: #eccad2; stroke: #cf8fa0; }
  .map .shield text { font: 10px 'Noto Sans', sans-serif; stroke: none; fill: #6b1a33; }
  .zoom, .info { position: absolute; display: grid; gap: 1px; padding: 2px; border-radius: 4px; background: rgba(255, 255, 255, 0.400); }
  .zoom { left: 9px; top: 9px; }
  .info { right: 10px; bottom: 10px; }
  .zoom button, .info button { width: 25px; height: 25px; padding: 0; border: 0; border-radius: 2px; background: #7b98bc; color: #fff; font: 700 16px/25px 'Noto Sans', sans-serif; }
  .info button { font: 700 18px/24px 'Noto Sans', sans-serif; }

  .contact { display: flex; padding-top: 24px; }
  .fields { display: grid; gap: 10px; width: 327px; align-content: start; }
  input { box-sizing: border-box; width: 327px; height: 40px; margin: 0; padding: 2px 13px 0; border: 0; background: #f1f2f6; font: 14.200px Vazirmatn, sans-serif; }
  input::placeholder { color: #999; opacity: 1; }
  .message { width: 468px; margin-right: 30px; display: flex; flex-direction: column; align-items: flex-end; }
  .area { position: relative; box-sizing: border-box; width: 468px; height: 151px; padding: 7px 13px; background: #f1f2f6; color: #999; font-size: 14px; line-height: 24px; }
  .area svg { position: absolute; left: 4px; bottom: 3px; width: 8px; height: 8px; fill: #b5b5b8; }
  .send { width: 119px; height: 50px; margin-top: 26px; padding: 0; border: 0; background: #00e0ae; color: #fff; font: 500 15.900px/52px Vazirmatn, sans-serif; }
  .ways { width: 255px; margin-right: 30px; list-style: none; }
  .ways li { display: flex; justify-content: space-between; height: 60px; }
  .ways div { margin-top: -1px; }
  .ways h3 { height: 20px; font-size: 15.600px; font-weight: 700; line-height: 20px; color: #222; }
  .ways h3.latin { font-weight: 500; font-size: 14.900px; line-height: 18px; }
  .ways p { line-height: 26px; color: #999; }
  .ways svg { width: 20px; height: 20px; fill: none; stroke: #00e0ae; stroke-width: 1.300; }

  footer { background: #343a40; color: #fff; }
  .cols { display: flex; box-sizing: border-box; height: 686px; padding: 185px 119px 0 120px; }
  .cols p { color: #7b8288; line-height: 26.700px; }
  .about { width: 380px; }
  .about h2 { font-size: 34px; font-weight: 600; line-height: 54px; }
  .about p { padding-top: 10px; margin-bottom: 5px; }
  .about p + p { padding-top: 9px; }
  h4 { line-height: 48px; font-size: 16.900px; font-weight: 700; }
  .links { width: 190px; }
  .links h4 { font-size: 16.200px; margin-bottom: 9px; }
  .links a { display: block; height: 38.800px; line-height: 38.800px; color: #7b8288; }
  .pics { width: 285px; }
  .reach h4 { margin-bottom: 15px; }
  .reach h5 { display: flex; align-items: center; height: 28px; font-size: 15.500px; font-weight: 700; }
  .reach h5 svg { width: 28px; height: 28px; margin-left: 3px; fill: #00e0ae; }
  .reach h5 .w { fill: #fff; }
  .way { margin-bottom: 15px; }
  .way .latin { font-size: 14.800px; }
  .credit { height: 91px; line-height: 94px; background: #222529; text-align: center; font-size: 15px; font-weight: 700; }
</style>
